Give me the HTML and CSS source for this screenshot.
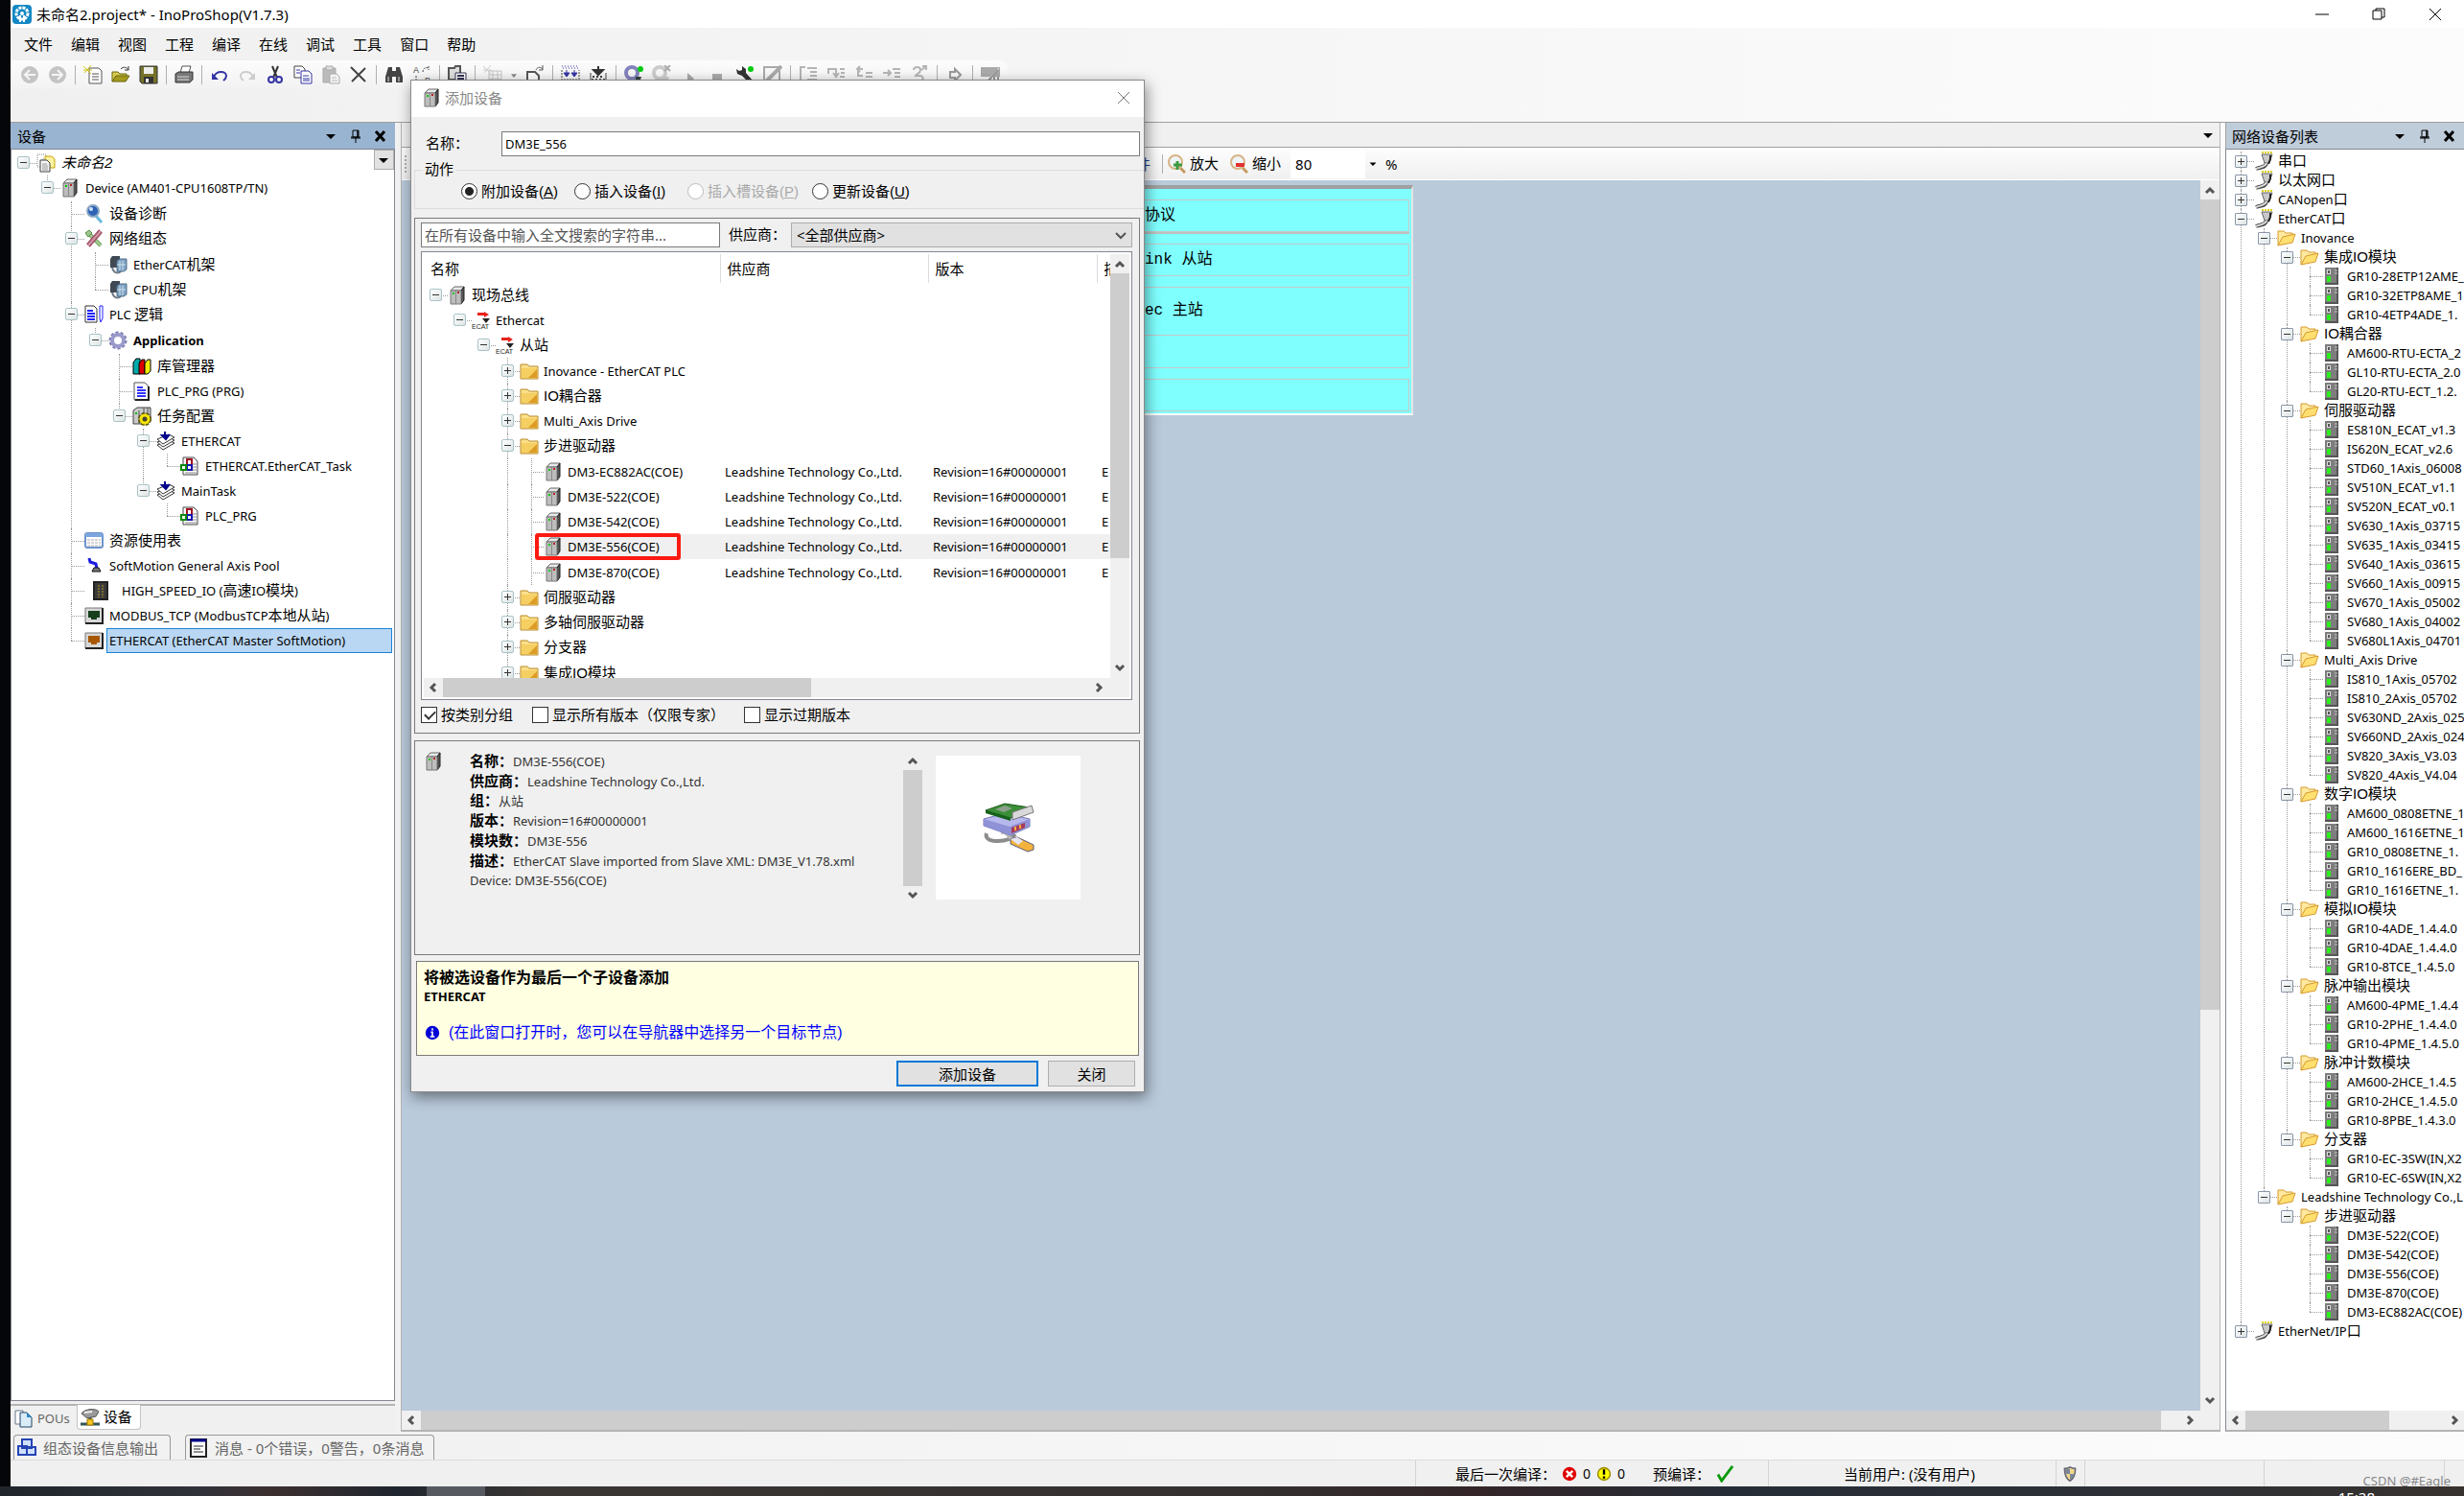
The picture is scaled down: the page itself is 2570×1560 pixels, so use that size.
FILE: index.html
```html
<!DOCTYPE html>
<html lang="zh-CN">
<head>
<meta charset="utf-8">
<title>未命名2.project* - InoProShop(V1.7.3)</title>
<link rel="stylesheet" href="styles.css">
</head>
<body>
<svg class="sprite" aria-hidden="true">
  <symbol id="cab" viewBox="0 0 20 20"><path d="M3 5 7 1h10l-3 4z" fill="#e8e8e8" stroke="#666"/><path d="M14 5l3-4v14l-3 4z" fill="#555" stroke="#222"/><path d="M3 5h11v14H3z" fill="#bdbdbd" stroke="#777"/><path d="M8.500 5v14" stroke="#888"/><path d="M5 7h2v2H5z" fill="#0c0"/><path d="M10 6h2v2h-2z" fill="#b22"/></symbol>
  <symbol id="ecat" viewBox="0 0 20 20"><path d="M6 2h7V1l5 3-5 3V5H6z" fill="#e8241c"/><path d="M11 8h8l-4 5z" fill="#222"/><text x="0" y="19" font-size="7" font-family="Liberation Sans" fill="#222">ECAT</text></symbol>
  <symbol id="fold" viewBox="0 0 20 20"><path d="M1 3h7l2 2h9v13H1z" fill="#fbe08a" stroke="#b98a2a"/><path d="M2 7h16v10H2z" fill="#f6cf62"/><path d="M18 8v9H9z" fill="#dd9d24"/></symbol>
  <symbol id="open" viewBox="0 0 20 20"><path d="M1 18V3h6l2 2h7v3" fill="#ffe9a0" stroke="#d69a2d"/><path d="M1 18 6 9l13-3-3 9z" fill="#ffdf70" stroke="#d69a2d"/></symbol>
  <symbol id="plug" viewBox="0 0 20 20"><path d="M8 1h11" stroke="#dfd20a" stroke-width="2" stroke-dasharray="2 1"/><path d="M8 3h11l-1 3-2 6h-5L9 6z" fill="#c9c9c9" stroke="#666"/><path d="M17 4v4l-2 5" stroke="#222" stroke-width="2" fill="none"/><path d="M13 12c-1 5-6 4-11 6" fill="none" stroke="#444" stroke-width="4"/><path d="M13 12c-1 4-6 4-11 6" fill="none" stroke="#ddd" stroke-width="2"/></symbol>
  <symbol id="mod" viewBox="0 0 20 20"><path d="M2 1h14v17H2z" fill="#7d7d7d"/><path d="M15 1v17H2" fill="none" stroke="#555" stroke-width="2"/><path d="M4 3h4v5H4z" fill="#ddd"/><path d="M5 4h2v3H5z" fill="#555"/><path d="M4 10h4v6H4z" fill="#2bf01c"/><path d="M12 4h3M12 7h3" stroke="#ccc"/></symbol>
  <symbol id="docs" viewBox="0 0 20 20"><path d="M1 1h9v5H6v8H1z" fill="#fff" stroke="#888" stroke-dasharray="1 1"/><path d="M9 3h7l3 3v9H9z" fill="#fbf3a4" stroke="#c8a400"/><path d="M4 7h7l3 3v9H4z" fill="#f5f5f5" stroke="#444"/><path d="M6 11h5M6 13h6M6 15h6M6 17h6" stroke="#999"/></symbol>
  <symbol id="mag" viewBox="0 0 20 20"><path d="m12 12 6 7" stroke="#6cb8dc" stroke-width="3"/><circle cx="9" cy="7" r="6" fill="#2d62b4" stroke="#8ba5c4" stroke-width="2"/><circle cx="7" cy="5" r="2" fill="#cfe2fa"/></symbol>
  <symbol id="tools" viewBox="0 0 20 20"><path d="M3 3l14 14" stroke="#6c9a57" stroke-width="4"/><path d="M3 3l14 14" stroke="#a8d296" stroke-width="2"/><path d="M1 4l4-3 3 3-4 4z" fill="#9cc78a" stroke="#5c8b48"/><path d="M17 2 4 17" stroke="#a04c62" stroke-width="5"/><path d="M17 2 4 17" stroke="#d09aa8" stroke-width="2"/></symbol>
  <symbol id="rack" viewBox="0 0 20 20"><path d="M4 1h8v12H2V4z" fill="#3f4a54"/><path d="M4 13c2 7 7 6 9 4" fill="none" stroke="#6d7a86" stroke-width="2"/><path d="M9 6l3-2h7v11l-3 2H9z" fill="#7fa3c2" stroke="#4e6e8a"/><path d="M12 6v10M15 6v10M9 10h9" stroke="#cfe0ee"/></symbol>
  <symbol id="plc" viewBox="0 0 20 20"><path d="M1 1h9l3 3v14H1z" fill="#fff" stroke="#333"/><path d="M3 6h6M3 9h8M3 12h8M3 15h8" stroke="#22f" stroke-width="2"/><path d="M16 1h3v13l-2 4-1-4z" fill="#fff" stroke="#22f"/></symbol>
  <symbol id="gear" viewBox="0 0 20 20"><circle cx="10" cy="10" r="8" fill="none" stroke="#7c7cb4" stroke-width="3" stroke-dasharray="3 2"/><circle cx="10" cy="10" r="6" fill="none" stroke="#9a9acb" stroke-width="4"/></symbol>
  <symbol id="books" viewBox="0 0 20 20"><path d="M1 6l3-4h4v16H1z" fill="#0aa" stroke="#000"/><path d="M7 7l3-4h3v15H7z" fill="#d00" stroke="#000"/><path d="M13 7l3-4h3v12l-3 3h-3z" fill="#ee0" stroke="#000"/></symbol>
  <symbol id="page" viewBox="0 0 20 20"><path d="M2 1h11l4 4v14H2z" fill="#fff" stroke="#555"/><path d="M17 5v14H3" fill="none" stroke="#222" stroke-width="2"/><path d="M5 6h6M5 9h9M5 12h9M5 15h9" stroke="#33f" stroke-width="2"/></symbol>
  <symbol id="task" viewBox="0 0 20 20"><path d="M1 4l4-3h14v14l-3 3H1z" fill="#c9c9c9" stroke="#444"/><path d="M7 4v14M12 1v8M16 1v8" stroke="#555"/><path d="M3 6h2v2H3z" fill="#0b0"/><circle cx="13" cy="13" r="5" fill="none" stroke="#5a5200" stroke-width="4" stroke-dasharray="3 1"/><circle cx="13" cy="13" r="4" fill="#443" stroke="#f5e400" stroke-width="3"/></symbol>
  <symbol id="stack" viewBox="0 0 20 20"><path d="M1 14 13 9l6 3-12 7z" fill="#fff" stroke="#333"/><path d="M1 11 13 6l6 3-12 7z" fill="#fff" stroke="#333"/><path d="M1 8 13 3l6 3-12 7z" fill="#fff" stroke="#333"/><path d="M9 0v5M6 4h7l-3 4z" stroke="#00008b" stroke-width="2" fill="#00008b"/></symbol>
  <symbol id="call" viewBox="0 0 20 20"><path d="M3 1h11l4 4v14H3z" fill="#fff" stroke="#444"/><path d="M13 8h4M13 11h4M13 14h4M5 17h12" stroke="#888"/><path d="M7 3h5v6H7z" fill="#fff" stroke="#a01020" stroke-width="2"/><path d="M7 9h5v5H7z" fill="#fff" stroke="#1515b0" stroke-width="2"/><path d="M1 9h5v5H1z" fill="#fff" stroke="#0a8a0a" stroke-width="2"/></symbol>
  <symbol id="grid" viewBox="0 0 20 20"><rect x="1" y="2" width="18" height="15" rx="2" fill="#fff" stroke="#6c94cc" stroke-width="2"/><path d="M1 2h18v4H1z" fill="#7ba6de"/><path d="M3 9h14M3 12h14M3 15h14" stroke="#aaa" stroke-dasharray="3 1"/></symbol>
  <symbol id="axis" viewBox="0 0 20 20"><path d="M5 2l1 4 6 2 1 5" fill="none" stroke="#1b1be0" stroke-width="3"/><path d="M10 12h5l2 4H8z" fill="#777" stroke="#111"/></symbol>
  <symbol id="hsio" viewBox="0 0 20 20"><path d="M3 1h14v18H3z" fill="#3a3a3a" stroke="#222" stroke-width="2"/><path d="M8 4v13M12 4v13" stroke="#b99a2a" stroke-dasharray="2 1"/></symbol>
  <symbol id="portg" viewBox="0 0 20 20"><path d="M1 2h18v16H1z" fill="#d8d8d8" stroke="#777"/><path d="M19 2v16H1" fill="none" stroke="#222" stroke-width="2"/><path d="M4 5h12v7h-3v2H7v-2H4z" fill="#173f1c"/></symbol>
  <symbol id="porto" viewBox="0 0 20 20"><path d="M1 2h18v16H1z" fill="#d8d8d8" stroke="#777"/><path d="M19 2v16H1" fill="none" stroke="#222" stroke-width="2"/><path d="M4 5h12v7h-3v2H7v-2H4z" fill="#a85800"/></symbol>
  <symbol id="pin" viewBox="0 0 20 20"><path d="M7 4h6v7H7zM12 4v7M5 11h10M10 11v6" fill="none" stroke="#000"/><path d="M12 4v7M5 12h10" stroke="#000"/></symbol>
  <symbol id="x" viewBox="0 0 20 20"><path d="M5 5l9 10M14 5 5 15" stroke="#000" stroke-width="3"/></symbol>
  <symbol id="tri" viewBox="0 0 20 20"><path d="M5 8h10l-5 5z" fill="#000"/></symbol>
  <symbol id="up" viewBox="0 0 20 20"><path d="M6 13l4-4 4 4" fill="none" stroke="#555" stroke-width="3"/></symbol>
  <symbol id="dn" viewBox="0 0 20 20"><path d="M6 7l4 4 4-4" fill="none" stroke="#555" stroke-width="3"/></symbol>
  <symbol id="lf" viewBox="0 0 20 20"><path d="M12 6l-4 4 4 4" fill="none" stroke="#555" stroke-width="3"/></symbol>
  <symbol id="rt" viewBox="0 0 20 20"><path d="M8 6l4 4-4 4" fill="none" stroke="#555" stroke-width="3"/></symbol>
  <symbol id="zin" viewBox="0 0 20 20"><path d="m14 14 5 5" stroke="#c79a62" stroke-width="3"/><circle cx="9" cy="8" r="7" fill="#eef4f6" stroke="#d8b384" stroke-width="2"/><path d="M11 7v9M7 11h9" stroke="#3f9a3f" stroke-width="3"/></symbol>
  <symbol id="zout" viewBox="0 0 20 20"><path d="m14 14 5 5" stroke="#c79a62" stroke-width="3"/><circle cx="9" cy="8" r="7" fill="#eef4f6" stroke="#d8b384" stroke-width="2"/><path d="M7 11h9" stroke="#e33030" stroke-width="4"/></symbol>
</svg>

<div class="desk">
<div class="app">
  <header class="title">
    <svg class="logo" viewBox="0 0 20 20"><rect width="20" height="20" rx="4" fill="#1388c4"/><circle cx="10" cy="9" r="6" fill="none" stroke="#fff" stroke-width="3" stroke-dasharray="3 1"/><circle cx="10" cy="9" r="2" fill="#fff"/><path d="M8 11v7M12 11v7" stroke="#fff" stroke-width="2"/></svg>
    <h1>未命名2.project* - InoProShop(V1.7.3)</h1>
    <div class="winbtns">
      <button aria-label="最小化"><svg viewBox="0 0 20 20"><path d="M3 10h14" stroke="#000"/></svg></button>
      <button aria-label="还原"><svg viewBox="0 0 20 20"><path d="M4 6h9v9H4zM7 6V4h9v9h-3" fill="none" stroke="#000"/></svg></button>
      <button aria-label="关闭"><svg viewBox="0 0 20 20"><path d="M4 4l12 12M16 4 4 16" stroke="#000"/></svg></button>
    </div>
  </header>
  <nav class="menu"><button>文件</button><button>编辑</button><button>视图</button><button>工程</button><button>编译</button><button>在线</button><button>调试</button><button>工具</button><button>窗口</button><button>帮助</button></nav>
  <div class="tools">
    <button aria-label="后退"><svg viewBox="0 0 20 20"><circle cx="10" cy="10" r="9" fill="#c4c4c4"/><path d="M16 10H5M10 5l-5 5 5 5" fill="none" stroke="#f4f4f4" stroke-width="2"/></svg></button>
    <button aria-label="前进"><svg viewBox="0 0 20 20"><circle cx="10" cy="10" r="9" fill="#c4c4c4"/><path d="M4 10h11M10 5l5 5-5 5" fill="none" stroke="#f4f4f4" stroke-width="2"/></svg></button>
    <i class="sep"></i>
    <button aria-label="新建"><svg viewBox="0 0 20 20"><path d="M6 3h10l3 3v13H6z" fill="#fff" stroke="#555"/><path d="M9 9h7M9 12h7M9 15h7" stroke="#555"/><path d="M0 1l8 8M8 0 1 8M0 5h9" stroke="#d2c416"/></svg></button>
    <button aria-label="打开"><svg viewBox="0 0 20 20"><path d="M1 17V7h6l2 2h7v3" fill="#d6cb50" stroke="#6b6410"/><path d="M1 17l4-6h14l-4 6z" fill="#a39a1e" stroke="#6b6410"/><path d="M10 4c3-3 6-2 8 1M18 1v4h-4" fill="none" stroke="#333"/></svg></button>
    <button aria-label="保存"><svg viewBox="0 0 20 20"><path d="M1 1h18v18H3l-2-2z" fill="#77722a" stroke="#333"/><path d="M5 2h10v7H5z" fill="#eee"/><path d="M5 12h10v7H5z" fill="#333"/><path d="M7 14h3v4H7z" fill="#eee"/></svg></button>
    <i class="sep"></i>
    <button aria-label="打印"><svg viewBox="0 0 20 20"><path d="M6 8l2-7h9l-2 7" fill="#fff" stroke="#555"/><path d="M1 9l3-2h15v8l-3 3H1z" fill="#777" stroke="#333"/><path d="M3 12h12M3 15h12" stroke="#ddd"/></svg></button>
    <i class="sep"></i>
    <button aria-label="撤销"><svg viewBox="0 0 20 20"><path d="M4 12c3-7 13-6 13-1 0 3-2 4-3 5" fill="none" stroke="#3434a4" stroke-width="2"/><path d="M2 8v7h7z" fill="#3434a4"/></svg></button>
    <button aria-label="重做"><svg viewBox="0 0 20 20"><path d="M16 12C13 5 3 6 3 11c0 3 2 4 3 5" fill="none" stroke="#ccc" stroke-width="2"/><path d="M18 8v7h-7z" fill="#ccc"/></svg></button>
    <button aria-label="剪切"><svg viewBox="0 0 20 20"><path d="M7 1l5 12M13 1 8 13" stroke="#333" stroke-width="2"/><circle cx="6" cy="15" r="3" fill="none" stroke="#3434a4" stroke-width="2"/><circle cx="14" cy="15" r="3" fill="none" stroke="#3434a4" stroke-width="2"/></svg></button>
    <button aria-label="复制"><svg viewBox="0 0 20 20"><path d="M1 1h8l3 3v9H1z" fill="#fff" stroke="#444"/><path d="M8 6h8l3 3v10H8z" fill="#fff" stroke="#3434a4"/><path d="M3 5h4M3 8h4M10 11h6M10 14h7M10 16h7" stroke="#3434a4"/></svg></button>
    <button aria-label="粘贴"><svg viewBox="0 0 20 20"><path d="M2 3h13v15H2z" fill="#bbb" stroke="#aaa"/><path d="M5 1h7v4H5z" fill="#ddd" stroke="#aaa"/><path d="M9 9h7l3 3v7H9z" fill="#f4f4f4" stroke="#aaa"/><path d="M11 13h5M11 16h6" stroke="#bbb"/></svg></button>
    <button aria-label="删除"><svg viewBox="0 0 20 20"><path d="M2 2l15 15M17 3 3 17" stroke="#444" stroke-width="2"/></svg></button>
    <i class="sep"></i>
    <button aria-label="查找"><svg viewBox="0 0 20 20"><path d="M4 2h4v4h4V2h4l3 10v6h-7v-6H8v6H1v-6z" fill="#444"/><path d="M4 12v5M15 12v5" stroke="#ddd"/></svg></button>
    <button aria-label="替换"><svg viewBox="0 0 20 20"><text x="1" y="8" font-size="9" font-family="Liberation Sans" fill="#444">A</text><text x="13" y="19" font-size="9" font-family="Liberation Sans" fill="#444">B</text><path d="M11 7c0-4 3-5 6-4M17 1v4M4 11v6h6" fill="none" stroke="#444" stroke-dasharray="2 1"/></svg></button>
    <i class="sep"></i>
    <button aria-label="书签"><svg viewBox="0 0 20 20"><path d="M1 3h6l1-2h5v14H1z" fill="#ddd" stroke="#555" stroke-width="2"/><path d="M8 8h11v11H8z" fill="#fff" stroke="#335"/><path d="M10 11h7M10 14h7" stroke="#335" stroke-width="2"/></svg></button>
    <i class="sep"></i>
    <button aria-label="添加对象"><svg viewBox="0 0 20 20"><path d="M0 1l8 8M8 0 1 8M0 5h9" stroke="#ccc"/><path d="M6 6h13v13H6zM6 10h13M6 14h13M10 6v13M15 6v13" fill="none" stroke="#c4c4c4"/></svg></button>
    <button class="drop" aria-label="更多"><svg viewBox="0 0 8 20"><path d="M0 9h8l-4 5z" fill="#888"/></svg></button>
    <button aria-label="编辑对象"><svg viewBox="0 0 20 20"><path d="M2 7h8l4 4v9H2z" fill="#fff" stroke="#555" stroke-width="2"/><path d="M11 5c2-4 5-3 7-1M18 0v5h-4" fill="none" stroke="#555"/></svg></button>
    <i class="sep"></i>
    <button aria-label="生成"><svg viewBox="0 0 20 20"><path d="M1 1h18M2 3h16" stroke="#3434a4" stroke-dasharray="1 2"/><path d="M6 5v4M14 5v4M3 8l3 4 3-4zM11 8l3 4 3-4z" fill="#3434a4" stroke="#3434a4"/><path d="M1 5v14h18V5M3 15h14" fill="none" stroke="#444" stroke-dasharray="2 1"/></svg></button>
    <button aria-label="重新生成"><svg viewBox="0 0 20 20"><path d="M10 1v6M5 5l5 5 5-5z" fill="#333" stroke="#333" stroke-width="2"/><path d="M2 8v11h16V8" fill="none" stroke="#444"/><path d="M4 12h12M3 15h14M4 18h12" stroke="#444" stroke-width="2" stroke-dasharray="2 2"/></svg></button>
    <i class="sep"></i>
    <button aria-label="登录"><svg viewBox="0 0 20 20"><circle cx="8" cy="8" r="6" fill="none" stroke="#8484bd" stroke-width="4"/><circle cx="17" cy="4" r="3" fill="#0c1"/><path d="M12 12h6l-2 6h-4z" fill="#344"/></svg></button>
    <button aria-label="退出登录"><svg viewBox="0 0 20 20"><circle cx="8" cy="8" r="6" fill="none" stroke="#ccc" stroke-width="4"/><path d="M13 0l6 6M19 0l-6 6" stroke="#aaa" stroke-width="2"/><path d="M12 12h6l-2 6h-4z" fill="#ccc"/></svg></button>
    <button aria-label="启动"><svg viewBox="0 0 20 20"><path d="M8 8l7 6-7 6z" fill="#aaa"/></svg></button>
    <button aria-label="停止"><svg viewBox="0 0 20 20"><path d="M5 9h10v10H5z" fill="#aaa"/></svg></button>
    <button aria-label="设置"><svg viewBox="0 0 20 20"><path d="M1 4l3 2 3-1V1l4 3v4l8 9-3 3-9-9-5-2z" fill="#333"/><circle cx="16" cy="4" r="3" fill="#0c1"/></svg></button>
    <button aria-label="强制"><svg viewBox="0 0 20 20"><path d="M1 2h16v16H1z" fill="none" stroke="#aaa" stroke-width="2"/><path d="M4 16 19 1" stroke="#aaa" stroke-width="4"/></svg></button>
    <i class="sep"></i>
    <button aria-label="跳过"><svg viewBox="0 0 20 20"><path d="M7 2H2v14h4M9 3h10M12 7h7M12 11h7M9 15h10" fill="none" stroke="#b5b5b5" stroke-width="2"/></svg></button>
    <button aria-label="跳入"><svg viewBox="0 0 20 20"><path d="M2 9V4h8v7M7 8l3 4 3-4M14 4h5M15 8h4M14 12h5M9 16h10" fill="none" stroke="#b5b5b5" stroke-width="2"/></svg></button>
    <button aria-label="跳出"><svg viewBox="0 0 20 20"><path d="M9 4H4v7h5M6 1 3 4l3 3M12 8h7M12 12h7M9 16h10" fill="none" stroke="#b5b5b5" stroke-width="2"/></svg></button>
    <button aria-label="运行到光标"><svg viewBox="0 0 20 20"><path d="M1 8h8M6 5l3 3-3 3M11 4h8M13 8h6M13 12h6M9 16h10" fill="none" stroke="#b5b5b5" stroke-width="2"/></svg></button>
    <button aria-label="设置语句"><svg viewBox="0 0 20 20"><path d="M4 5c0-4 7-4 7 0s-4 3-5 6h5c4 0 3 7-1 7s-5-2-5-3M12 5l5-4M17 5V1h-4" fill="none" stroke="#b5b5b5" stroke-width="2"/></svg></button>
    <i class="sep"></i>
    <button aria-label="显示下一语句"><svg viewBox="0 0 20 20"><path d="M5 7h5V4l6 6-6 6v-3H5z" fill="none" stroke="#999" stroke-width="2"/></svg></button>
    <i class="sep"></i>
    <button aria-label="流控制"><svg viewBox="0 0 20 20"><path d="M0 2h20v10H0z" fill="#aaa"/><path d="M19 3 4 18" stroke="#eee"/><path d="M18 5 6 18M10 14v6M14 12v8M18 12v8" stroke="#999" stroke-width="2"/></svg></button>
  </div>

  <main class="work">
    <section class="left">
      <div class="phead"><h2>设备</h2><button aria-label="菜单"><svg><use href="#tri"/></svg></button><button aria-label="固定"><svg><use href="#pin"/></svg></button><button aria-label="关闭"><svg><use href="#x"/></svg></button></div>
      <div class="pbody">
        <button class="combo" aria-label="选择"><svg><use href="#tri"/></svg></button>
        <ul class="tree nav">
          <li><p class="zh it"><button class="m" aria-label="折叠"></button><svg><use href="#docs"/></svg>未命名2</p>
          <ul><li><p><button class="m" aria-label="折叠"></button><svg><use href="#cab"/></svg>Device (AM401-CPU1608TP/TN)</p>
            <ul>
              <li><p class="zh"><svg><use href="#mag"/></svg>设备诊断</p></li>
              <li><p class="zh"><button class="m" aria-label="折叠"></button><svg><use href="#tools"/></svg>网络组态</p>
                <ul><li><p><svg><use href="#rack"/></svg>EtherCAT<span class="zh">机架</span></p></li><li><p><svg><use href="#rack"/></svg>CPU<span class="zh">机架</span></p></li></ul></li>
              <li><p><button class="m" aria-label="折叠"></button><svg><use href="#plc"/></svg>PLC&nbsp;<span class="zh">逻辑</span></p>
                <ul><li><p><button class="m" aria-label="折叠"></button><svg><use href="#gear"/></svg><b>Application</b></p>
                  <ul>
                    <li><p class="zh"><svg><use href="#books"/></svg>库管理器</p></li>
                    <li><p><svg><use href="#page"/></svg>PLC_PRG (PRG)</p></li>
                    <li><p class="zh"><button class="m" aria-label="折叠"></button><svg><use href="#task"/></svg>任务配置</p>
                      <ul>
                        <li><p><button class="m" aria-label="折叠"></button><svg><use href="#stack"/></svg>ETHERCAT</p><ul><li><p><svg><use href="#call"/></svg>ETHERCAT.EtherCAT_Task</p></li></ul></li>
                        <li><p><button class="m" aria-label="折叠"></button><svg><use href="#stack"/></svg>MainTask</p><ul><li><p><svg><use href="#call"/></svg>PLC_PRG</p></li></ul></li>
                      </ul></li>
                  </ul></li></ul></li>
              <li><p class="zh"><svg><use href="#grid"/></svg>资源使用表</p></li>
              <li><p><svg><use href="#axis"/></svg>SoftMotion General Axis Pool</p></li>
              <li><p class="shift"><svg><use href="#hsio"/></svg>HIGH_SPEED_IO (<span class="zh">高速</span>IO<span class="zh">模块</span>)</p></li>
              <li><p><svg><use href="#portg"/></svg>MODBUS_TCP (ModbusTCP<span class="zh">本地从站</span>)</p></li>
              <li><p class="on"><svg><use href="#porto"/></svg><span>ETHERCAT (EtherCAT Master SoftMotion)</span></p></li>
            </ul></li></ul></li>
        </ul>
      </div>
      <div class="ptabs">
        <button><svg viewBox="0 0 20 20"><path d="M1 2h8v14H1z" fill="#fff" stroke="#678"/><path d="M6 4h7l5 5v10H6z" fill="#d9ecf8" stroke="#246"/><path d="M13 4l5 5h-5z" fill="#2a8ac8"/></svg>POUs</button>
        <button class="on zh"><svg viewBox="0 0 20 20"><path d="M1 6c3-5 15-6 18-2l-3 5-9 2z" fill="#999" stroke="#555"/><path d="M4 5l8-1" stroke="#eee" stroke-width="2"/><path d="M0 17h20M10 10v5" stroke="#355" stroke-width="3"/><path d="M7 12h6v6H7z" fill="#f5c520" stroke="#a87a00"/></svg>设备</button>
      </div>
    </section>

    <section class="center">
      <div class="etabs"><button aria-label="窗口列表"><svg><use href="#tri"/></svg></button></div>
      <div class="zoombar">
        <span class="grip"></span>
        <span class="part">组件</span><i class="sep"></i>
        <button class="zh"><svg><use href="#zin"/></svg>放大</button>
        <button class="zh"><svg><use href="#zout"/></svg>缩小</button>
        <label class="pct"><input value="80" aria-label="缩放比例"><svg><use href="#tri"/></svg>%</label>
      </div>
      <div class="stage">
        <div class="canvas">
          <div class="proto">
            <p class="first">协议</p><p>ink 从站</p><p class="tall">ec 主站</p><p></p><p></p>
          </div>
        </div>
        <div class="vbar"><svg><use href="#up"/></svg><div class="track"><i></i></div><svg><use href="#dn"/></svg></div>
        <div class="hbar"><svg><use href="#lf"/></svg><div class="track"><i></i></div><svg><use href="#rt"/></svg></div>
      </div>
    </section>

    <section class="right">
      <div class="phead"><h2>网络设备列表</h2><button aria-label="菜单"><svg><use href="#tri"/></svg></button><button aria-label="固定"><svg><use href="#pin"/></svg></button><button aria-label="关闭"><svg><use href="#x"/></svg></button></div>
      <div class="pbody">
        <ul class="tree net">
          <li><p class="zh"><button class="p" aria-label="展开"></button><svg><use href="#plug"/></svg>串口</p></li>
          <li><p class="zh"><button class="p" aria-label="展开"></button><svg><use href="#plug"/></svg>以太网口</p></li>
          <li><p><button class="p" aria-label="展开"></button><svg><use href="#plug"/></svg>CANopen<span class="zh">口</span></p></li>
          <li><p><button class="m" aria-label="折叠"></button><svg><use href="#plug"/></svg>EtherCAT<span class="zh">口</span></p>
          <ul>
            <li><p><button class="m" aria-label="折叠"></button><svg><use href="#open"/></svg>Inovance</p>
            <ul>
              <li><p class="zh"><button class="m" aria-label="折叠"></button><svg><use href="#open"/></svg>集成IO模块</p>
              <ul>
                <li><p><svg><use href="#mod"/></svg>GR10-28ETP12AME_</p></li>
                <li><p><svg><use href="#mod"/></svg>GR10-32ETP8AME_1</p></li>
                <li><p><svg><use href="#mod"/></svg>GR10-4ETP4ADE_1.</p></li>
              </ul></li>
              <li><p class="zh"><button class="m" aria-label="折叠"></button><svg><use href="#open"/></svg>IO耦合器</p>
              <ul>
                <li><p><svg><use href="#mod"/></svg>AM600-RTU-ECTA_2</p></li>
                <li><p><svg><use href="#mod"/></svg>GL10-RTU-ECTA_2.0</p></li>
                <li><p><svg><use href="#mod"/></svg>GL20-RTU-ECT_1.2.</p></li>
              </ul></li>
              <li><p class="zh"><button class="m" aria-label="折叠"></button><svg><use href="#open"/></svg>伺服驱动器</p>
              <ul>
                <li><p><svg><use href="#mod"/></svg>ES810N_ECAT_v1.3</p></li>
                <li><p><svg><use href="#mod"/></svg>IS620N_ECAT_v2.6</p></li>
                <li><p><svg><use href="#mod"/></svg>STD60_1Axis_06008</p></li>
                <li><p><svg><use href="#mod"/></svg>SV510N_ECAT_v1.1</p></li>
                <li><p><svg><use href="#mod"/></svg>SV520N_ECAT_v0.1</p></li>
                <li><p><svg><use href="#mod"/></svg>SV630_1Axis_03715</p></li>
                <li><p><svg><use href="#mod"/></svg>SV635_1Axis_03415</p></li>
                <li><p><svg><use href="#mod"/></svg>SV640_1Axis_03615</p></li>
                <li><p><svg><use href="#mod"/></svg>SV660_1Axis_00915</p></li>
                <li><p><svg><use href="#mod"/></svg>SV670_1Axis_05002</p></li>
                <li><p><svg><use href="#mod"/></svg>SV680_1Axis_04002</p></li>
                <li><p><svg><use href="#mod"/></svg>SV680L1Axis_04701</p></li>
              </ul></li>
              <li><p><button class="m" aria-label="折叠"></button><svg><use href="#open"/></svg>Multi_Axis Drive</p>
              <ul>
                <li><p><svg><use href="#mod"/></svg>IS810_1Axis_05702</p></li>
                <li><p><svg><use href="#mod"/></svg>IS810_2Axis_05702</p></li>
                <li><p><svg><use href="#mod"/></svg>SV630ND_2Axis_025</p></li>
                <li><p><svg><use href="#mod"/></svg>SV660ND_2Axis_024</p></li>
                <li><p><svg><use href="#mod"/></svg>SV820_3Axis_V3.03</p></li>
                <li><p><svg><use href="#mod"/></svg>SV820_4Axis_V4.04</p></li>
              </ul></li>
              <li><p class="zh"><button class="m" aria-label="折叠"></button><svg><use href="#open"/></svg>数字IO模块</p>
              <ul>
                <li><p><svg><use href="#mod"/></svg>AM600_0808ETNE_1</p></li>
                <li><p><svg><use href="#mod"/></svg>AM600_1616ETNE_1</p></li>
                <li><p><svg><use href="#mod"/></svg>GR10_0808ETNE_1.</p></li>
                <li><p><svg><use href="#mod"/></svg>GR10_1616ERE_BD_</p></li>
                <li><p><svg><use href="#mod"/></svg>GR10_1616ETNE_1.</p></li>
              </ul></li>
              <li><p class="zh"><button class="m" aria-label="折叠"></button><svg><use href="#open"/></svg>模拟IO模块</p>
              <ul>
                <li><p><svg><use href="#mod"/></svg>GR10-4ADE_1.4.4.0</p></li>
                <li><p><svg><use href="#mod"/></svg>GR10-4DAE_1.4.4.0</p></li>
                <li><p><svg><use href="#mod"/></svg>GR10-8TCE_1.4.5.0</p></li>
              </ul></li>
              <li><p class="zh"><button class="m" aria-label="折叠"></button><svg><use href="#open"/></svg>脉冲输出模块</p>
              <ul>
                <li><p><svg><use href="#mod"/></svg>AM600-4PME_1.4.4</p></li>
                <li><p><svg><use href="#mod"/></svg>GR10-2PHE_1.4.4.0</p></li>
                <li><p><svg><use href="#mod"/></svg>GR10-4PME_1.4.5.0</p></li>
              </ul></li>
              <li><p class="zh"><button class="m" aria-label="折叠"></button><svg><use href="#open"/></svg>脉冲计数模块</p>
              <ul>
                <li><p><svg><use href="#mod"/></svg>AM600-2HCE_1.4.5</p></li>
                <li><p><svg><use href="#mod"/></svg>GR10-2HCE_1.4.5.0</p></li>
                <li><p><svg><use href="#mod"/></svg>GR10-8PBE_1.4.3.0</p></li>
              </ul></li>
              <li><p class="zh"><button class="m" aria-label="折叠"></button><svg><use href="#open"/></svg>分支器</p>
              <ul>
                <li><p><svg><use href="#mod"/></svg>GR10-EC-3SW(IN,X2</p></li>
                <li><p><svg><use href="#mod"/></svg>GR10-EC-6SW(IN,X2</p></li>
              </ul></li>
            </ul></li>
            <li><p><button class="m" aria-label="折叠"></button><svg><use href="#open"/></svg>Leadshine Technology Co.,L</p>
            <ul>
              <li><p class="zh"><button class="m" aria-label="折叠"></button><svg><use href="#open"/></svg>步进驱动器</p>
              <ul>
                <li><p><svg><use href="#mod"/></svg>DM3E-522(COE)</p></li>
                <li><p><svg><use href="#mod"/></svg>DM3E-542(COE)</p></li>
                <li><p><svg><use href="#mod"/></svg>DM3E-556(COE)</p></li>
                <li><p><svg><use href="#mod"/></svg>DM3E-870(COE)</p></li>
                <li><p><svg><use href="#mod"/></svg>DM3-EC882AC(COE)</p></li>
              </ul></li>
            </ul></li>
          </ul></li>
          <li><p><button class="p" aria-label="展开"></button><svg><use href="#plug"/></svg>EtherNet/IP<span class="zh">口</span></p></li>
        </ul>
        <div class="hbar"><svg><use href="#lf"/></svg><div class="track"><i></i></div><svg><use href="#rt"/></svg></div>
      </div>
    </section>
  </main>

  <div class="otabs">
    <button><svg viewBox="0 0 20 20"><path d="M1 8h9v9H1zM10 9h9v8h-9zM5 1h10v9H5z" fill="#cfe0ff" stroke="#2544b4" stroke-width="2"/></svg>组态设备信息输出</button>
    <button class="msg"><svg viewBox="0 0 20 20"><path d="M2 1h16v18H2z" fill="#fff" stroke="#222" stroke-width="2"/><path d="M2 2h16" stroke="#00008b" stroke-width="3"/><path d="M5 8h10M5 11h7M5 14h10" stroke="#222"/></svg>消息 - 0个错误，0警告，0条消息</button>
  </div>
  <footer class="status">
    <div class="build">最后一次编译：
      <svg viewBox="0 0 20 20"><circle cx="10" cy="10" r="9" fill="#e00000"/><path d="M6 6l8 8M14 6l-8 8" stroke="#fff" stroke-width="3"/></svg><span>0</span>
      <svg viewBox="0 0 20 20"><circle cx="10" cy="10" r="8" fill="#ff0" stroke="#a09000" stroke-width="2"/><path d="M10 4v7M10 13v3" stroke="#000" stroke-width="3"/></svg><span>0</span>
      <span class="pre">预编译：</span>
      <svg class="ok" viewBox="0 0 20 20"><path d="M2 11l4 7L18 2" fill="none" stroke="#0a9a0a" stroke-width="3"/></svg></div>
    <div class="user">当前用户: (没有用户)</div>
    <div class="sh"><svg viewBox="0 0 20 20"><path d="M10 1c3 2 5 2 7 2 0 8-2 13-7 16C5 16 3 11 3 3c2 0 4 0 7-2z" fill="#f1d98a" stroke="#667" stroke-width="2"/><path d="M10 3v7H4c0-2 0-4 0-6zM10 10h6c-1 4-3 6-6 8z" fill="#7b8798"/></svg></div>
    <div class="s1"></div><div class="s2"></div><div class="s3">CSDN @#Eagle</div>
  </footer>

  <div class="dialog" role="dialog" aria-label="添加设备">
    <div class="dtitle"><svg><use href="#cab"/></svg><h2>添加设备</h2><button aria-label="关闭"><svg viewBox="0 0 20 20"><path d="M4 4l12 12M16 4 4 16" stroke="#777"/></svg></button></div>
    <div class="drow"><label for="nm">名称：</label><input id="nm" value="DM3E_556"></div>
    <fieldset>
      <legend>动作</legend>
      <label><input type="radio" name="act" checked>附加设备(<u>A</u>)</label>
      <label><input type="radio" name="act">插入设备(<u>I</u>)</label>
      <label class="off"><input type="radio" name="act" disabled>插入槽设备(<u>P</u>)</label>
      <label><input type="radio" name="act">更新设备(<u>U</u>)</label>
    </fieldset>
    <div class="box pick">
      <div class="filter"><input placeholder="在所有设备中输入全文搜索的字符串..." aria-label="搜索"><label for="vd">供应商：</label><div class="sel"><select id="vd"><option>&lt;全部供应商&gt;</option></select><svg viewBox="0 0 20 20"><path d="M5 8l5 5 5-5" fill="none" stroke="#555" stroke-width="2"/></svg></div></div>
      <div class="list">
        <div class="rows">
        <table>
          <colgroup><col class="c1"><col class="c2"><col class="c3"><col></colgroup>
          <thead><tr><th>名称</th><th>供应商</th><th>版本</th><th>描述</th></tr></thead>
          <tbody>
            <tr><td class="l0 zh"><p><button class="m" aria-label="折叠"></button><svg><use href="#cab"/></svg>现场总线</p></td></tr>
            <tr><td class="l1"><p><button class="m" aria-label="折叠"></button><svg><use href="#ecat"/></svg>Ethercat</p></td></tr>
            <tr><td class="l2 zh"><p><button class="m" aria-label="折叠"></button><svg><use href="#ecat"/></svg>从站</p></td></tr>
            <tr><td class="l3"><p><button class="p" aria-label="展开"></button><svg><use href="#fold"/></svg>Inovance - EtherCAT PLC</p></td></tr>
            <tr><td class="l3 zh"><p><button class="p" aria-label="展开"></button><svg><use href="#fold"/></svg>IO耦合器</p></td></tr>
            <tr><td class="l3"><p><button class="p" aria-label="展开"></button><svg><use href="#fold"/></svg>Multi_Axis Drive</p></td></tr>
            <tr><td class="l3 zh"><p><button class="m" aria-label="折叠"></button><svg><use href="#fold"/></svg>步进驱动器</p></td></tr>
            <tr><td class="l4"><p><svg><use href="#cab"/></svg>DM3-EC882AC(COE)</p></td><td>Leadshine Technology Co.,Ltd.</td><td>Revision=16#00000001</td><td>E</td></tr>
            <tr><td class="l4"><p><svg><use href="#cab"/></svg>DM3E-522(COE)</p></td><td>Leadshine Technology Co.,Ltd.</td><td>Revision=16#00000001</td><td>E</td></tr>
            <tr><td class="l4"><p><svg><use href="#cab"/></svg>DM3E-542(COE)</p></td><td>Leadshine Technology Co.,Ltd.</td><td>Revision=16#00000001</td><td>E</td></tr>
            <tr class="on"><td class="l4"><p><svg><use href="#cab"/></svg>DM3E-556(COE)</p><i class="mark"></i></td><td>Leadshine Technology Co.,Ltd.</td><td>Revision=16#00000001</td><td>E</td></tr>
            <tr><td class="l4"><p><svg><use href="#cab"/></svg>DM3E-870(COE)</p></td><td>Leadshine Technology Co.,Ltd.</td><td>Revision=16#00000001</td><td>E</td></tr>
            <tr><td class="l3 zh"><p><button class="p" aria-label="展开"></button><svg><use href="#fold"/></svg>伺服驱动器</p></td></tr>
            <tr><td class="l3 zh"><p><button class="p" aria-label="展开"></button><svg><use href="#fold"/></svg>多轴伺服驱动器</p></td></tr>
            <tr><td class="l3 zh"><p><button class="p" aria-label="展开"></button><svg><use href="#fold"/></svg>分支器</p></td></tr>
            <tr><td class="l3 zh"><p><button class="p" aria-label="展开"></button><svg><use href="#fold"/></svg>集成IO模块</p></td></tr>
          </tbody>
        </table>
        </div>
        <div class="vbar"><svg><use href="#up"/></svg><div class="track"><i></i></div><svg><use href="#dn"/></svg></div>
        <div class="hbar"><svg><use href="#lf"/></svg><div class="track"><i></i></div><svg><use href="#rt"/></svg></div>
      </div>
      <div class="checks">
        <label><input type="checkbox" checked>按类别分组</label>
        <label><input type="checkbox">显示所有版本（仅限专家）</label>
        <label><input type="checkbox">显示过期版本</label>
      </div>
    </div>
    <div class="box info">
      <svg class="dev"><use href="#cab"/></svg>
      <div class="facts">
        <p><b>名称：</b>DM3E-556(COE)</p>
        <p><b>供应商：</b>Leadshine Technology Co.,Ltd.</p>
        <p class="grp"><b>组：</b><span>从站</span></p>
        <p><b>版本：</b>Revision=16#00000001</p>
        <p><b>模块数：</b>DM3E-556</p>
        <p><b>描述：</b>EtherCAT Slave imported from Slave XML: DM3E_V1.78.xml</p>
        <p>Device: DM3E-556(COE)</p>
      </div>
      <div class="vbar"><svg><use href="#up"/></svg><div class="track"><i></i></div><svg><use href="#dn"/></svg></div>
      <div class="pic"><svg viewBox="0 0 56 52"><path d="M5 32c-2 6 4 8 12 8s14-2 18-7" fill="none" stroke="#8c8c8c" stroke-width="4"/><path d="M20 31c6-1 8 3 12 9" fill="none" stroke="#b5b5b5" stroke-width="4"/><path d="M2 17 24 11l26 6v8L30 34 2 24z" fill="#b7b9ee" stroke="#7476b4"/><path d="M2 17l27 8 21-8v8L30 34 2 24z" fill="#8f92d6"/><path d="M31 26l14-5v5l-14 6z" fill="#a83a5a"/><path d="M35 25v4M40 23v4" stroke="#f0b040" stroke-width="2"/><path d="M4 8 24 1l26 4-20 11z" fill="#3a8f36" stroke="#1d5c1c"/><path d="M14 7l10-4 8 3-9 4z" fill="#8ba08a"/><path d="M4 8l26 8v3L4 11z" fill="#14611a"/><path d="M32 10l20-7 2 7-22 8z" fill="#d9d9d9" stroke="#777"/><path d="M30 38l7-2 17 8v5l-6 2-18-8z" fill="#f2b23c" stroke="#5b5b7a"/><path d="M30 38l7-2 6 4-5 4z" fill="#e6e6f0"/></svg></div>
    </div>
    <div class="note">
      <strong>将被选设备作为最后一个子设备添加</strong>
      <strong class="tgt">ETHERCAT</strong>
      <p><svg viewBox="0 0 20 20"><circle cx="10" cy="10" r="9" fill="#0000d8"/><path d="M10 4v3M8 9h2v6M7 15h6" stroke="#fff" stroke-width="2" fill="none"/></svg>(在此窗口打开时，您可以在导航器中选择另一个目标节点)</p>
    </div>
    <div class="acts"><button class="pri">添加设备</button><button>关闭</button></div>
  </div>
</div>
</div>
<div class="taskbar"><span class="act"></span><time>15:28</time></div>
</body>
</html>
```
FILE: styles.css
```css
* { box-sizing: border-box; }
body { margin: 0; height: 100vh; display: flex; flex-direction: column; overflow: hidden; font: 13px/20px "Noto Sans", "Noto Sans CJK SC", sans-serif; color: #000; background: #05060a; }
button, input, select { font: inherit; color: inherit; margin: 0; padding: 0; border: 0; border-radius: 0; background: none; }
p, h1, h2, ul { margin: 0; padding: 0; font-weight: normal; list-style: none; }
svg { display: block; width: 20px; height: 20px; flex: none; }
.sprite { position: absolute; width: 0; height: 0; }
.zh { font-family: "Liberation Sans", "Noto Sans CJK SC", sans-serif; font-size: 15px; }

.desk { flex: 1; min-height: 0; display: flex; padding-left: 11px; }
.app { flex: 1; min-width: 0; display: flex; flex-direction: column; background: linear-gradient(to right, #f0f0f0, #fcfcfc); }

/* title bar, menu, toolbar */
.title { height: 29px; display: flex; align-items: center; background: #fff; padding-left: 2px; }
.title h1 { font-size: 15px; margin-left: 5px; flex: 1; }
.winbtns { display: flex; padding-right: 1px; }
.winbtns button { width: 59px; display: flex; justify-content: center; }
.menu { height: 34px; display: flex; align-items: center; gap: 19px; padding-left: 14px; font-size: 15px; }
.tools { align-self: flex-start; height: 30px; display: flex; align-items: center; gap: 9px; padding: 0 8px 0 10px; border-radius: 0 8px 8px 0; background: linear-gradient(#fcfcfc, #f2f2f2); margin-bottom: 34px; }
.sep { width: 1px; height: 20px; margin: 0 -1px; background: #b0b0b0; }
.drop svg { width: 6px; }

/* work area */
.work { flex: 1; min-height: 0; display: flex; border-top: 1px solid #a0a0a0; }
.left { width: 401px; display: flex; flex-direction: column; background: #f0f0f0; }
.phead { height: 28px; display: flex; align-items: center; gap: 6px; padding: 0 5px 0 7px; background: #99b4d1; border-bottom: 1px solid #808890; }
.phead h2 { flex: 1; font-size: 15px; }
.pbody { flex: 1; min-height: 0; position: relative; border: 1px solid #828790; border-top: 0; background: #fff; }
.combo { position: absolute; right: 0; top: 0; width: 21px; height: 21px; background: #e1e1e1; border: 1px solid #adadad; }
.combo svg { margin: -1px; }
.ptabs { height: 29px; display: flex; align-items: flex-start; margin-top: 3px; border-top: 2px solid #b4b4b4; color: #666; }
.ptabs button { height: 26px; display: flex; align-items: center; gap: 4px; padding: 0 7px 0 4px; }
.ptabs button.on { margin: -1px 0 0; padding: 0 8px 0 3px; color: #000; background: #fff; border: 1px solid #c4c4c4; border-top: 0; border-radius: 0 0 4px 4px; }

/* trees */
.tree li { position: relative; }
.tree p { height: 26px; display: flex; align-items: center; padding-left: 20px; white-space: nowrap; position: relative; }
.tree p svg { margin-right: 6px; position: relative; }
.tree p::before { content: ""; position: absolute; left: 6px; width: 14px; top: 13px; border-top: 1px dotted #999; }
.tree li::before { content: ""; position: absolute; left: 6px; top: 0; bottom: 0; border-left: 1px dotted #999; }
.tree li:last-child::before { bottom: auto; height: 13px; }
.tree ul { padding-left: 25px; }
.m, .p { position: absolute; left: 0; top: 6px; width: 13px; height: 13px; border: 1px solid #a9c3c6; border-radius: 2px; background: linear-gradient(#333, #333) center / 7px 1px no-repeat, linear-gradient(135deg, #fff, #dde4e4); }
.p { background: linear-gradient(#333, #333) center / 7px 1px no-repeat, linear-gradient(#333, #333) center / 1px 7px no-repeat, linear-gradient(135deg, #fff, #dde4e4); }
.nav { padding: 1px 0 0 6px; }
.nav > li::before { display: none; }
.nav ul ul { margin-top: 1px; }
.nav ul ul ul ul ul { margin-top: 0; }
.it { font-style: italic; }
.tree .shift { padding-left: 27px; }
.tree .shift svg { margin-right: 12px; }
.on span { flex: 1; height: 26px; line-height: 24px; margin: 0 2px 0 -3px; padding-left: 2px; background: #b9d7f3; border: 1px solid #1883d7; }

.right { width: 249px; margin-left: 5px; display: flex; flex-direction: column; }
.right .phead { padding-left: 6px; background: #bfcddb; border-left: 1px solid #a0a0a0; }
.right .pbody { display: flex; flex-direction: column; overflow: hidden; border-right: 0; border-bottom: 2px solid #b4b4b4; }
.net { flex: 1; min-height: 0; padding: 2px 0 0 9px; overflow: hidden; }
.net p { height: 20px; }
.net p svg { margin-right: 5px; }
.net p::before { top: 10px; }
.net li:last-child::before { height: 10px; }
.net ul { padding-left: 24px; }
.net .m, .net .p { top: 4px; border-color: #8a96a8; border-radius: 1px; }

/* scroll bars */
.vbar { width: 20px; display: flex; flex-direction: column; background: #f0f0f0; }
.hbar { height: 20px; display: flex; background: #f0f0f0; }
.track { flex: 1; display: flex; }
.vbar .track { flex-direction: column; }
.track i { background: #cdcdcd; }

/* editor */
.center { flex: 1; min-width: 0; margin-left: 6px; display: flex; flex-direction: column; border: 1px solid #b4b4b4; border-top: 0; border-bottom-width: 2px; background: #f0f0f0; }
.etabs { height: 26px; display: flex; justify-content: flex-end; align-items: center; border-bottom: 1px solid #a0a0a0; padding-right: 2px; }
.zoombar { height: 34px; display: flex; align-items: center; font-size: 15px; background: linear-gradient(#fdfdfd, #f0f0f0); border-bottom: 1px solid #fff; }
.grip { width: 2px; height: 18px; margin: 0 746px 0 3px; border-left: 2px dotted #b0b0b0; }
.part { margin-right: 13px; color: #1f3f7f; }
.zoombar button { display: flex; align-items: center; gap: 4px; margin-left: 5px; }
.zoombar button + button { margin-left: 11px; }
.pct { display: flex; align-items: center; margin-left: 10px; }
.pct input { width: 78px; height: 30px; padding-left: 5px; background: #fff; }
.pct svg { width: 16px; height: 14px; margin-right: 5px; }
.stage { flex: 1; min-height: 0; display: grid; grid-template: minmax(0, 1fr) 20px / minmax(0, 1fr) 20px; background: #f0f0f0; }
.canvas { position: relative; background: #b9cadb; }
.stage .hbar { grid-column: 1 / 3; padding-right: 21px; }
.stage .vbar .track i { flex: 0 0 68%; }
.stage .hbar .track { padding-right: 20px; }
.stage .hbar .track i { flex: 1; }
.proto { position: absolute; left: 600px; top: 5px; width: 455px; padding: 11px 2px 2px; background: #80ffff; border: 2px solid #c0c0c0; border-top: 4px solid #a0a0a0; border-bottom-color: #fff; border-right-color: #e4e4e4; font: 16px/32px "Liberation Mono", "Noto Sans CJK SC", monospace; color: #000; }
.proto p { height: 34px; margin-bottom: 11px; padding-left: 170px; border: 1px solid #c8c8c8; white-space: nowrap; }
.proto .first { margin-bottom: 12px; box-shadow: 0 2px #c0c0c0; }
.proto .tall { height: 51px; line-height: 48px; margin-bottom: 0; }
.proto .tall + p { border-top-color: transparent; }
.proto p:last-child { margin: 0; }
.right .track i { flex: 0 0 72%; }

/* output tabs and status bar */
.otabs { height: 29px; margin-top: 1px; display: flex; align-items: flex-end; gap: 15px; padding-left: 3px; border-bottom: 1px solid #dcdcdc; }
.otabs button { height: 26px; display: flex; align-items: center; gap: 7px; padding: 0 12px 0 3px; font-size: 15px; color: #666; border: 1px solid #999; border-bottom: 0; border-radius: 4px 4px 0 0; background: #f2f2f2; }
.otabs .msg { padding-right: 10px; }
.status { height: 27px; display: flex; justify-content: flex-end; font-size: 15px; background: #f0f0f0; }
.status > div { display: flex; align-items: center; border-left: 1px solid #d4d4d4; }
.status svg { width: 16px; height: 16px; }
.status .ok { width: 19px; height: 19px; }
.status span { font-size: 14px; }
.status .build { width: 368px; gap: 6px; padding-left: 41px; }
.status .pre { font-size: 15px; margin-left: 23px; }
.status .user { width: 300px; padding-left: 78px; }
.sh { width: 30px; padding-left: 6px; }
.s1 { width: 187px; }
.s2 { width: 188px; }
.status .s3 { width: 21px; justify-content: flex-end; padding: 14px 14px 0 0; white-space: nowrap; font-size: 13px; line-height: 12px; color: #888; }
.taskbar { height: 10px; display: flex; justify-content: space-between; overflow: hidden; padding: 0 93px 0 445px; background: linear-gradient(to right, #1f252b, #30323a 8%, #3c2f30 11%, #1f252e 16%, #3a3634 22%, #33302f 50%, #332528 60%, #262c36 70%, #2c3036 85%, #37322f); }
.taskbar .act { width: 61px; background: #565a60; }
.taskbar time { font-size: 15px; line-height: 22px; color: #fff; }

/* dialog */
.dialog { position: absolute; left: 428px; top: 83px; width: 766px; padding: 0 3px 5px; display: flex; flex-direction: column; background: #f0f0f0; border: 1px solid #8a8a8a; box-shadow: 2px 5px 14px rgba(0, 0, 0, .45); font-size: 15px; }
.dtitle { height: 38px; margin: 0 -3px; padding: 0 11px 2px; display: flex; align-items: center; background: #fff; }
.dtitle h2 { flex: 1; margin-left: 4px; font-size: 15px; color: #888; }
.drow { height: 26px; margin: 15px 1px 0 12px; display: flex; align-items: center; }
.drow label { width: 79px; padding-bottom: 2px; }
.drow input { flex: 1; height: 26px; padding-left: 3px; font-size: 13px; background: #fff; border: 1px solid #7a7a7a; }
fieldset { margin: 4px -3px 0 0; height: 51px; padding: 2px 0 0 48px; border: 1px solid #dcdcdc; border-right: 0; display: flex; align-items: flex-start; font-family: "Liberation Sans", "Noto Sans CJK SC", sans-serif; }
legend { margin-left: -40px; padding: 0 2px; }
fieldset label { display: flex; align-items: center; width: 118px; height: 21px; white-space: nowrap; }
fieldset label.off { width: 130px; color: #aaa; }
fieldset input { appearance: none; width: 17px; height: 17px; margin-right: 4px; border: 1px solid #333; border-radius: 50%; background: #fff; }
fieldset input:checked { background: radial-gradient(circle, #222 4px, #fff 5px); }
fieldset input:disabled { border-color: #bbb; }
.box { border: 1px solid #7a7a7a; margin: 9px 1px 0 0; }
.pick { padding: 4px 7px 9px 6px; }
.filter { display: flex; align-items: center; height: 26px; }
.filter input { width: 312px; height: 26px; padding-left: 3px; background: #fff; border: 1px solid #7a7a7a; }
.filter input::placeholder { color: #555; opacity: 1; }
.filter label { width: 74px; padding: 0 0 2px 9px; white-space: nowrap; }
.sel { flex: 1; position: relative; }
.sel select { appearance: none; width: 100%; height: 26px; padding-left: 5px; background: #e1e1e1; border: 1px solid #adadad; }
.sel svg { position: absolute; right: 2px; top: 3px; }
.list { margin-top: 4px; padding: 2px; display: grid; grid-template: 442px 20px / minmax(0, 1fr) 20px; background: #fff; border: 1px solid #828790; }
.list .hbar { grid-column: 1 / 3; padding-right: 22px; }
.list .vbar .track i { flex: 0 0 74%; }
.list .hbar .track i { flex: 0 0 57%; }
.rows { overflow: hidden; }
.rows table { width: 100%; table-layout: fixed; border-collapse: collapse; font-size: 13px; }
.c1 { width: 309px; } .c2 { width: 217px; } .c3 { width: 176px; }
th { height: 30px; padding: 0 0 0 7px; text-align: left; font-weight: normal; font-size: 15px; border-right: 1px solid #dcdcdc; overflow: hidden; white-space: nowrap; }
th:last-child { border: 0; }
td { height: 26px; padding: 0 0 0 5px; position: relative; white-space: nowrap; overflow: hidden; }
tbody tr:nth-child(4n) td { height: 27px; }
td p { height: 26px; display: flex; align-items: center; padding-left: 19px; position: relative; }
td p svg { margin-right: 5px; position: relative; }
td p::before { content: ""; position: absolute; left: 6px; width: 13px; top: 13px; border-top: 1px dotted #999; }
td.l0 { padding-left: 6px; }
td.l1 { padding-left: 31px; } td.l2 { padding-left: 56px; } td.l3 { padding-left: 81px; } td.l4 { padding-left: 106px; }
.l3::before, .l4::after { content: ""; position: absolute; left: 87px; top: 0; bottom: 0; border-left: 1px dotted #999; }
.l4::before { content: ""; position: absolute; left: 112px; top: 0; bottom: 0; border-left: 1px dotted #999; }
tr.on { background: linear-gradient(to right, #fff 125px, #f0f0f0 125px); }
tr.on td:first-child { overflow: visible; }
.mark { position: absolute; left: 116px; top: -1px; width: 152px; height: 28px; border: 4px solid #fb1a12; border-radius: 3px; }
.checks { display: flex; align-items: center; height: 20px; margin-top: 5px; gap: 20px; }
.checks label { display: flex; align-items: center; gap: 4px; }
.checks input { appearance: none; width: 17px; height: 17px; background: #fff; border: 1px solid #333; position: relative; }
.checks input:checked::after { content: ""; position: absolute; left: 5px; top: 1px; width: 5px; height: 9px; border: solid #333; border-width: 0 2px 2px 0; transform: rotate(45deg); }
.info { height: 224px; margin-top: 7px; padding: 10px 9px; display: flex; align-items: flex-start; }
.dev { margin-top: 1px; }
.facts { width: 452px; margin-left: 28px; font-size: 13px; line-height: 21px; white-space: nowrap; color: #333; }
.facts b { font-size: 15px; color: #000; }
.facts p { height: 21px; }
.facts .grp { height: 20px; line-height: 18px; }
.info .vbar { height: 161px; }
.info .vbar .track i { flex: 1; }
.pic { width: 151px; height: 150px; margin: 5px 0 0 14px; display: flex; align-items: center; justify-content: center; background: #fff; }
.pic svg { width: 56px; height: 52px; }
.note { height: 99px; margin: 6px 2px 0; padding: 5px 7px; background: #ffffe1; border: 1px solid #7a7a7a; }
.note strong { display: block; font-size: 16px; line-height: 22px; }
.note .tgt { font-size: 13px; line-height: 18px; }
.note p { display: flex; align-items: center; gap: 8px; margin-top: 19px; font-size: 16px; color: #00f; font-family: "Liberation Sans", "Noto Sans CJK SC", sans-serif; }
.note p svg { width: 18px; height: 16px; }
.acts { display: flex; justify-content: flex-end; gap: 10px; margin: 5px 6px 0 0; }
.acts button { width: 91px; height: 27px; background: #e1e1e1; border: 1px solid #adadad; }
.acts .pri { width: 148px; border: 2px solid #0078d7; }
```
